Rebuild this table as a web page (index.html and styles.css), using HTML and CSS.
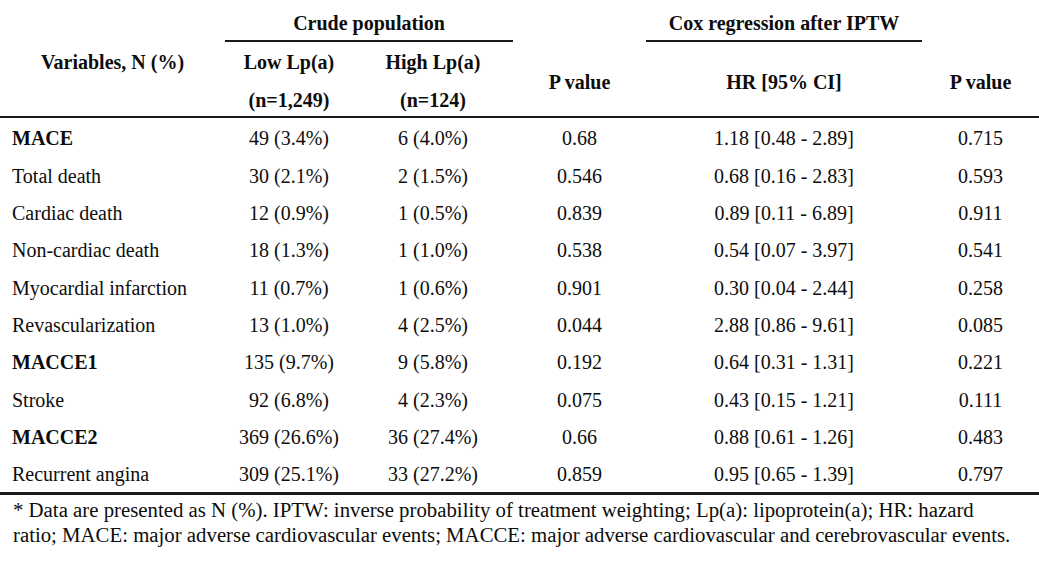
FILE: index.html
```html
<!DOCTYPE html>
<html lang="en">
<head>
<meta charset="utf-8">
<title>Lp(a) outcomes table</title>
<link rel="stylesheet" href="styles.css">
</head>
<body>
<div class="page">
<table class="results">
  <colgroup>
    <col class="c1"><col class="c2"><col class="c3"><col class="c4"><col class="c5"><col class="c6">
  </colgroup>
  <thead>
    <tr class="h1">
      <th></th>
      <th colspan="2" class="group">Crude population</th>
      <th></th>
      <th class="group">Cox regression after IPTW</th>
      <th></th>
    </tr>
    <tr class="h2">
      <th class="var">Variables, N (%)</th>
      <th>Low Lp(a)</th>
      <th>High Lp(a)</th>
      <th rowspan="2" class="mid">P value</th>
      <th rowspan="2" class="mid">HR [95% CI]</th>
      <th rowspan="2" class="mid">P value</th>
    </tr>
    <tr class="h3">
      <th></th>
      <th>(n=1,249)</th>
      <th>(n=124)</th>
    </tr>
  </thead>
  <tbody>
    <tr class="first"><td class="name b">MACE</td><td>49 (3.4%)</td><td>6 (4.0%)</td><td>0.68</td><td>1.18 [0.48 - 2.89]</td><td>0.715</td></tr>
    <tr class="tall"><td class="name">Total death</td><td>30 (2.1%)</td><td>2 (1.5%)</td><td>0.546</td><td>0.68 [0.16 - 2.83]</td><td>0.593</td></tr>
    <tr><td class="name">Cardiac death</td><td>12 (0.9%)</td><td>1 (0.5%)</td><td>0.839</td><td>0.89 [0.11 - 6.89]</td><td>0.911</td></tr>
    <tr><td class="name">Non-cardiac death</td><td>18 (1.3%)</td><td>1 (1.0%)</td><td>0.538</td><td>0.54 [0.07 - 3.97]</td><td>0.541</td></tr>
    <tr class="tall"><td class="name">Myocardial infarction</td><td>11 (0.7%)</td><td>1 (0.6%)</td><td>0.901</td><td>0.30 [0.04 - 2.44]</td><td>0.258</td></tr>
    <tr><td class="name">Revascularization</td><td>13 (1.0%)</td><td>4 (2.5%)</td><td>0.044</td><td>2.88 [0.86 - 9.61]</td><td>0.085</td></tr>
    <tr><td class="name b">MACCE1</td><td>135 (9.7%)</td><td>9 (5.8%)</td><td>0.192</td><td>0.64 [0.31 - 1.31]</td><td>0.221</td></tr>
    <tr class="tall"><td class="name">Stroke</td><td>92 (6.8%)</td><td>4 (2.3%)</td><td>0.075</td><td>0.43 [0.15 - 1.21]</td><td>0.111</td></tr>
    <tr><td class="name b">MACCE2</td><td>369 (26.6%)</td><td>36 (27.4%)</td><td>0.66</td><td>0.88 [0.61 - 1.26]</td><td>0.483</td></tr>
    <tr class="last"><td class="name">Recurrent angina</td><td>309 (25.1%)</td><td>33 (27.2%)</td><td>0.859</td><td>0.95 [0.65 - 1.39]</td><td>0.797</td></tr>
  </tbody>
</table>
<p class="note">* Data are presented as N (%). IPTW: inverse probability of treatment weighting; Lp(a): lipoprotein(a); HR: hazard<br>ratio; MACE: major adverse cardiovascular events; MACCE: major adverse cardiovascular and cerebrovascular events.</p>
</div>
</body>
</html>
```

FILE: styles.css
```css
html, body {
  margin: 0;
  padding: 0;
  background: #ffffff;
}

.page {
  width: 1039px;
  height: 562px;
  overflow: hidden;
  font-family: "Liberation Serif", "Times New Roman", Times, serif;
  font-size: 20px;
  color: #0d0d0d;
}

.results {
  width: 1039px;
  table-layout: fixed;
  border-collapse: separate;
  border-spacing: 0;
  font-family: inherit;
}

.c1 { width: 225px; }
.c2 { width: 128px; }
.c3 { width: 160px; }
.c4 { width: 133px; }
.c5 { width: 276px; }
.c6 { width: 117px; }

.results th,
.results td {
  padding: 0;
  line-height: 23px;
  text-align: center;
  vertical-align: middle;
  white-space: nowrap;
}

.results th {
  font-weight: bold;
}

.h1 {
  height: 42px;
}

.h1 th {
  padding-top: 6px;
  border-bottom: 2px solid transparent;
}

.h1 th.group {
  border-bottom: 2px solid #1a1a1a;
}

.h2 {
  height: 39px;
}

.h2 th {
  padding-top: 2px;
}

.h2 th.mid {
  padding-top: 6px;
  border-bottom: 2px solid #1a1a1a;
}

.h3 {
  height: 37px;
}

.h3 th {
  padding-top: 4px;
  border-bottom: 2px solid #1a1a1a;
}

.results tbody tr {
  height: 37px;
}

.results tbody tr.tall {
  height: 38px;
}

.results tbody tr.first {
  height: 39px;
}

.results tbody tr.first td {
  padding-top: 2px;
}

.results tbody tr.last {
  height: 39px;
}

.results tbody tr.last td {
  border-bottom: 3px solid #1a1a1a;
}

.results td.name {
  text-align: left;
  padding-left: 12px;
}

.results td.b {
  font-weight: bold;
}

.note {
  margin: 0;
  padding: 2px 0 0 13px;
  font-size: 20.8px;
  line-height: 25px;
  white-space: nowrap;
}
```
